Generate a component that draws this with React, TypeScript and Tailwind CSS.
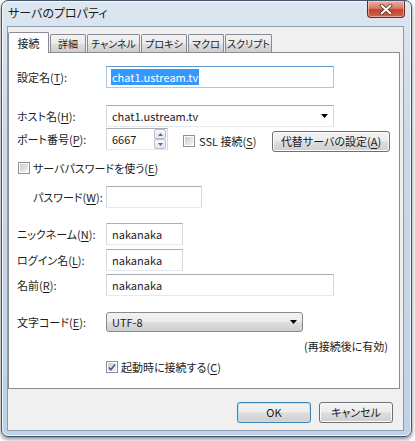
import React from 'react';

// mnemonic letter, underlined like a Windows accelerator key
function K({ c }: { c: string }) {
  return <span className="underline decoration-1 underline-offset-[2px]">{c}</span>;
}

function Label({ text, k, indent = 'pl-[8px]' }: { text: string; k: string; indent?: string }) {
  return (
    <div className={`w-[97px] shrink-0 whitespace-nowrap ${indent}`}>
      {text}(<K c={k} />):
    </div>
  );
}

function TextBox({ value, width, focused = false, selected = false }: { value?: string; width: string; focused?: boolean; selected?: boolean }) {
  const border = focused
    ? 'border-[#a9c8e4] border-t-[#5d97c9]'
    : 'border-[#d5d8de] border-t-[#abadb3] border-b-[#e3e9ef]';
  return (
    <div className={`${width} h-[22px] shrink-0 border ${border} bg-white flex items-center pl-[4px] [font-feature-settings:normal]`}>
      {selected ? (
        <span className="bg-[#3399ff] text-white px-px leading-[16px]">{value}</span>
      ) : (
        <span className="pl-px">{value}</span>
      )}
    </div>
  );
}

function Arrow() {
  return (
    <svg width="7" height="4" viewBox="0 0 7 4">
      <path d="M0 0h7L3.5 4z" fill="#000" />
    </svg>
  );
}

function CheckBox({ checked = false }: { checked?: boolean }) {
  return (
    <div className="w-[12px] h-[12px] shrink-0 border border-[#8e8f8f] bg-white p-px">
      <div className="w-full h-full bg-[linear-gradient(135deg,#c8cbce,#f4f4f4)] flex items-center justify-center">
        {checked && (
          <svg width="9" height="9" viewBox="0 0 9 9">
            <path d="M1 4.5l2.2 2.5L8 1.2" stroke="#3d5a9a" strokeWidth="1.8" fill="none" />
          </svg>
        )}
      </div>
    </div>
  );
}

function Spin() {
  const half = 'h-[10px] border border-[#b8bfc8] rounded-[2px] bg-[linear-gradient(180deg,#f7f8fa,#e3e6ea)] flex items-center justify-center';
  return (
    <div className="ml-auto mr-px flex flex-col w-[12px]">
      <div className={half}>
        <svg width="5" height="3" viewBox="0 0 5 3"><path d="M0 3h5L2.5 0z" fill="#4d6f99" /></svg>
      </div>
      <div className={half}>
        <svg width="5" height="3" viewBox="0 0 5 3"><path d="M0 0h5L2.5 3z" fill="#4d6f99" /></svg>
      </div>
    </div>
  );
}

function Button({ children, width, isDefault = false, className = '' }: { children: React.ReactNode; width: string; isDefault?: boolean; className?: string }) {
  return (
    <div
      className={`${width} h-[21px] rounded-[3px] border whitespace-nowrap ${
        isDefault ? 'border-[#3c7fb1] shadow-[inset_0_0_0_1px_#b7e4f7]' : 'border-[#707070] shadow-[inset_0_0_0_1px_#fbfbfb]'
      } bg-[linear-gradient(180deg,#f3f3f3_0%,#ececec_48%,#dddddd_52%,#cfcfcf_100%)] flex items-center justify-center ${className}`}
    >
      {children}
    </div>
  );
}

const tabs = [
  { name: '詳細', w: 'w-[36px]' },
  { name: 'チャンネル', w: 'w-[53px]' },
  { name: 'プロキシ', w: 'w-[46px]' },
  { name: 'マクロ', w: 'w-[36px]' },
  { name: 'スクリプト', w: 'w-[47px]' },
];

export default function App() {
  return (
    <div className="w-[415px] h-[441px] bg-white overflow-hidden font-['Noto_Sans_CJK_JP','Noto_Sans',sans-serif] text-[11px] leading-none text-[#1c1c1c] [font-feature-settings:'palt']">
      {/* window frame */}
      <div className="ml-px w-[411px] h-[437px] rounded-[7px] border border-[#41556b] bg-[linear-gradient(180deg,#dde7f1_0%,#cbd9e8_30%,#bfd2e6_100%)] shadow-[0_2px_4px_rgba(0,0,0,0.5),inset_0_0_0_1px_rgba(255,255,255,0.7)] flex flex-col">
        {/* title bar */}
        <div className="h-[25px] flex items-start">
          <div className="pl-[6px] pt-[6px] text-[12px] text-[#1a1a1a]">サーバのプロパティ</div>
          <div className="ml-auto mr-[6px] w-[38px] h-[17px] rounded-b-[4px] border border-t-0 border-[#6b2a20] bg-[linear-gradient(180deg,#eab1a4_0%,#d97a66_45%,#c2442c_55%,#d0664c_100%)] shadow-[inset_0_0_0_1px_rgba(255,230,220,0.5)] flex items-center justify-center">
            <svg width="14" height="11" viewBox="0 0 14 11">
              <path d="M2.5 1.5l9 8M11.5 1.5l-9 8" stroke="#5a2a22" strokeWidth="3.6" strokeLinecap="round" />
              <path d="M2.5 1.5l9 8M11.5 1.5l-9 8" stroke="#fff" strokeWidth="2" strokeLinecap="round" />
            </svg>
          </div>
        </div>

        {/* client area */}
        <div className="ml-[5px] w-[397px] h-[405px] border border-[#8b9cae] bg-[#f0f0f0] flex flex-col">
          {/* tabs */}
          <div className="mt-[5px] h-[20px] flex items-end relative z-10">
            <div className="w-[41px] h-[21px] -mb-px bg-white border border-b-0 border-[#898c95] rounded-t-[2px] flex justify-center pt-[5px]">接続</div>
            {tabs.map((t) => (
              <div
                key={t.name}
                className={`${t.w} h-[18px] shrink-0 whitespace-nowrap text-[10px] border border-b-0 border-[#898c95] rounded-t-[2px] bg-[linear-gradient(180deg,#f2f2f2_0%,#ebebeb_50%,#dddddd_51%,#cfcfcf_100%)] flex justify-center pt-[4px] ml-px`}
              >
                {t.name}
              </div>
            ))}
          </div>

          {/* tab panel */}
          <div className="w-[392px] h-[337px] bg-white border border-[#898c95] flex flex-col">
            <div className="mt-[13px] h-[22px] flex items-center">
              <Label text="設定名" k="T" />
              <TextBox value="chat1.ustream.tv" width="w-[228px]" focused selected />
            </div>

            <div className="mt-[17px] h-[22px] flex items-center">
              <Label text="ホスト名" k="H" />
              <div className="w-[228px] h-[22px] border border-[#d5d8de] border-t-[#abadb3] border-b-[#e3e9ef] flex items-center pl-[5px] pr-[5px] [font-feature-settings:normal]">
                <span>chat1.ustream.tv</span>
                <span className="ml-auto"><Arrow /></span>
              </div>
            </div>

            <div className="mt-px h-[23px] flex items-start pr-[9px]">
              <div className="h-[22px] flex items-center">
                <Label text="ポート番号" k="P" />
              </div>
              <div className="w-[62px] h-[22px] border border-[#d5d8de] border-t-[#abadb3] border-b-[#e3e9ef] flex items-center pl-[5px]">
                <span className="[font-feature-settings:normal]">6667</span>
                <Spin />
              </div>
              <div className="ml-[15px] h-[22px] mt-[2px] flex items-center gap-[4px]">
                <CheckBox />
                <span>SSL 接続(<K c="S" />)</span>
              </div>
              <Button width="w-[118px]" className="ml-auto mt-[3px]">
                代替サーバの設定(<K c="A" />)
              </Button>
            </div>

            <div className="mt-[10px] h-[14px] flex items-center pl-[9px] gap-[3px]">
              <CheckBox />
              <span>サーバパスワードを使う(<K c="E" />)</span>
            </div>

            <div className="mt-[11px] h-[22px] flex items-center">
              <Label text="パスワード" k="W" indent="pl-[24px]" />
              <TextBox width="w-[96px]" />
            </div>

            <div className="mt-[15px] h-[22px] flex items-center">
              <Label text="ニックネーム" k="N" />
              <TextBox value="nakanaka" width="w-[77px]" />
            </div>

            <div className="mt-[4px] h-[22px] flex items-center">
              <Label text="ログイン名" k="L" />
              <TextBox value="nakanaka" width="w-[77px]" />
            </div>

            <div className="mt-[3px] h-[22px] flex items-center">
              <Label text="名前" k="R" />
              <TextBox value="nakanaka" width="w-[228px]" />
            </div>

            <div className="mt-[16px] h-[20px] flex items-center">
              <Label text="文字コード" k="E" />
              <div className="w-[197px] h-[20px] rounded-[3px] border border-[#8a8a8a] bg-[linear-gradient(180deg,#f2f2f2_0%,#ebebeb_50%,#dddddd_51%,#cfcfcf_100%)] flex items-center pl-[5px] pr-[5px] [font-feature-settings:normal]">
                <span>UTF-8</span>
                <span className="ml-auto"><Arrow /></span>
              </div>
            </div>

            <div className="mt-[7px] h-[14px] flex items-center justify-end pr-[11px]">(再接続後に有効)</div>

            <div className="mt-[7px] h-[14px] flex items-center pl-[97px] gap-[3px]">
              <CheckBox checked />
              <span>起動時に接続する(<K c="C" />)</span>
            </div>
          </div>

          {/* dialog buttons */}
          <div className="mt-[13px] flex justify-end gap-[8px] pr-[10px]">
            <Button width="w-[74px]" isDefault>OK</Button>
            <Button width="w-[74px]">キャンセル</Button>
          </div>
        </div>
      </div>
    </div>
  );
}
